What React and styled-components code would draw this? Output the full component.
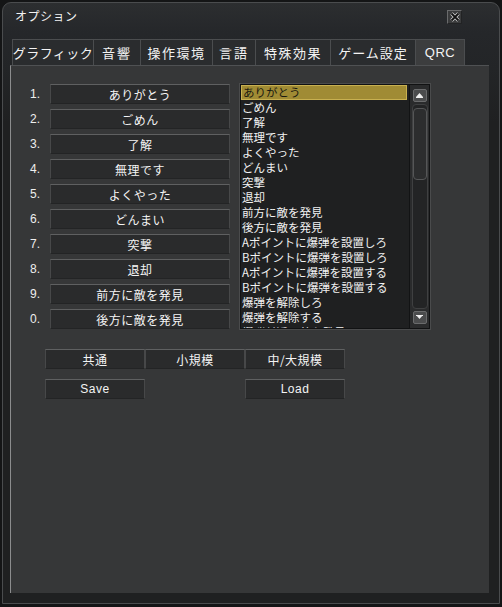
import React from 'react';
import styled, { createGlobalStyle } from 'styled-components';

const Global = createGlobalStyle`
  html, body { margin: 0; padding: 0; background: #121314; }
  body { font-family: "Noto Sans CJK JP", "Noto Sans", sans-serif; color: #f2f2f2; }
  #root { width: 502px; height: 607px; }
`;

const Window = styled.div`
  width: 502px;
  height: 607px;
  box-sizing: border-box;
  background: #141516;
  padding: 2px 2px 3px 2px;
  display: flex;
`;

const Frame = styled.div`
  flex: 1;
  display: flex;
  flex-direction: column;
  border: 1px solid #4a4c4e;
  border-radius: 9px 9px 0 0;
  background: linear-gradient(180deg, #2c2e30 0px, #25272a 30px, #232527 66px, #1f2021 120px);
  padding-bottom: 10px;
  min-height: 0;
`;

const TitleBar = styled.div`
  height: 25px;
  display: flex;
  align-items: center;
  justify-content: space-between;
  padding: 0 37px 0 12px;
  font-size: 12px;
  letter-spacing: 0.5px;
`;

const CloseBtn = styled.div`
  width: 15px;
  height: 14px;
  box-sizing: border-box;
  background: #3a3b3c;
  border: 1px solid #6a6b6c;
  border-right-color: #222324;
  border-bottom-color: #222324;
  display: flex;
  align-items: center;
  justify-content: center;
  margin-top: 3px;
`;

const TabRow = styled.div`
  display: flex;
  margin-top: 11px;
  padding-left: 9px;
  height: 26px;
`;

const Tab = styled.div`
  width: ${p => p.$w}px;
  height: 26px;
  box-sizing: border-box;
  border: 1px solid #4b4d4f;
  border-bottom: none;
  margin-right: -1px;
  background: ${p => (p.$active ? '#3c3d3e' : '#2a2c2e')};
  display: flex;
  align-items: center;
  justify-content: center;
  white-space: nowrap;
  font-size: 13px;
  letter-spacing: ${p => p.$ls}px;
  font-family: ${p => (p.$latin ? '"Liberation Sans", sans-serif' : '"Noto Sans CJK JP", sans-serif')};
  color: #f4f4f4;
`;

const Panel = styled.div`
  flex: 1;
  margin: 0 10px 0 7px;
  background: #363738;
  border-left: 1px solid #8c8d8e;
  border-top: 1px solid #4f5153;
  padding-top: 18px;
  display: flex;
  flex-direction: column;
`;

const Main = styled.div`
  display: flex;
  gap: 10px;
  align-items: flex-start;
`;

const SlotGrid = styled.div`
  display: grid;
  grid-template-columns: 29px 180px;
  grid-auto-rows: 20px;
  column-gap: 10px;
  row-gap: 5px;
`;

const Num = styled.div`
  text-align: right;
  font-family: "Liberation Sans", sans-serif;
  font-size: 12px;
  line-height: 20px;
  color: #eeeeee;
`;

const Btn = styled.div`
  width: ${p => (p.$w ? `${p.$w}px` : 'auto')};
  height: 20px;
  box-sizing: border-box;
  background: #2a2b2c;
  border: 1px solid #474849;
  border-top-color: #5f6061;
  border-bottom-color: #232425;
  display: flex;
  align-items: center;
  justify-content: center;
  font-size: 12px;
  letter-spacing: 0.5px;
  font-family: ${p => (p.$latin ? '"Liberation Sans", sans-serif' : '"Noto Sans CJK JP", sans-serif')};
  color: #f4f4f4;
`;

const ListBox = styled.div`
  width: 190px;
  height: 245px;
  box-sizing: border-box;
  border: 1px solid #111213;
  outline: 1px solid #4a4b4c;
  background: #1f2021;
  display: flex;
`;

const Items = styled.div`
  flex: 1;
  overflow: hidden;
`;

const Item = styled.div`
  height: 15px;
  font-size: 11.5px;
  padding-left: 1px;
  margin-right: 2px;
  white-space: nowrap;
  overflow: hidden;
  color: ${p => (p.$sel ? '#1a1a10' : '#f2f2f2')};
  background: ${p => (p.$sel ? '#a08b34' : 'transparent')};
  border: ${p => (p.$sel ? '1px solid #c8b050' : 'none')};
  box-sizing: border-box;
  line-height: ${p => (p.$sel ? '13px' : '15px')};
`;

const ScrollBar = styled.div`
  width: 20px;
  background: #2a2b2c;
  border-left: 1px solid #121314;
  display: flex;
  flex-direction: column;
  align-items: center;
  padding: 4px 0 4px;
  box-sizing: border-box;
  gap: 2px;
`;

const ArrowBtn = styled.div`
  width: 14px;
  height: 13px;
  box-sizing: border-box;
  border-radius: 2px;
  background: #4b4c4d;
  border: 1px solid #6a6b6c;
  display: flex;
  align-items: center;
  justify-content: center;
`;

const Track = styled.div`
  flex: 1;
  width: 16px;
  box-sizing: border-box;
  border: 1px solid #3f4041;
  border-radius: 4px;
  background: #232425;
  padding-top: 3px;
`;

const Thumb = styled.div`
  height: 72px;
  box-sizing: border-box;
  border: 1px solid #555657;
  border-radius: 4px;
  background: #2c2d2e;
`;

const Bottom = styled.div`
  padding-left: 34px;
  margin-top: 20px;
  display: flex;
  flex-direction: column;
  gap: 10px;
`;

const BtnRow = styled.div`
  display: flex;
  gap: ${p => p.$gap || 0}px;
`;

const slots = ['ありがとう', 'ごめん', '了解', '無理です', 'よくやった', 'どんまい', '突撃', '退却', '前方に敵を発見', '後方に敵を発見'];
const nums = ['1.', '2.', '3.', '4.', '5.', '6.', '7.', '8.', '9.', '0.'];
const list = [
  'ありがとう', 'ごめん', '了解', '無理です', 'よくやった', 'どんまい', '突撃', '退却',
  '前方に敵を発見', '後方に敵を発見', 'Aポイントに爆弾を設置しろ', 'Bポイントに爆弾を設置しろ',
  'Aポイントに爆弾を設置する', 'Bポイントに爆弾を設置する', '爆弾を解除しろ', '爆弾を解除する', '爆弾付近に敵を発見',
];
const tabs = [
  ['グラフィック', 82, 0.5], ['音響', 48, 2], ['操作環境', 73, 1.5], ['言語', 44, 2], ['特殊効果', 76, 1.5], ['ゲーム設定', 86, 1], ['QRC', 50, 0.5],
];

const Tri = ({ down }) => (
  <svg width="7" height="5" viewBox="0 0 7 5">
    <polygon points={down ? '0,0 7,0 3.5,4' : '3.5,0 7,4 0,4'} fill="#f0f0f0" />
    <rect x="0" y={down ? 0 : 4} width="7" height="1" fill="#f0f0f0" />
  </svg>
);

export default function App() {
  return (
    <>
      <Global />
      <Window>
        <Frame>
          <TitleBar>
            <span>オプション</span>
            <CloseBtn>
              <svg width="10" height="10" viewBox="0 0 10 10">
                <path d="M1.5 1.5 L8.5 8.5 M8.5 1.5 L1.5 8.5" stroke="#d0d0d0" strokeWidth="3.4" />
                <path d="M1.5 1.5 L8.5 8.5 M8.5 1.5 L1.5 8.5" stroke="#111" strokeWidth="1.8" />
              </svg>
            </CloseBtn>
          </TitleBar>
          <TabRow>
            {tabs.map(([t, w, ls]) => (
              <Tab key={t} $w={w} $ls={ls} $active={t === 'QRC'} $latin={t === 'QRC'}>{t}</Tab>
            ))}
          </TabRow>
          <Panel>
            <Main>
              <SlotGrid>
                {slots.map((s, i) => (
                  <React.Fragment key={i}>
                    <Num>{nums[i]}</Num>
                    <Btn>{s}</Btn>
                  </React.Fragment>
                ))}
              </SlotGrid>
              <ListBox>
                <Items>
                  {list.map((s, i) => (
                    <Item key={i} $sel={i === 0}>{s}</Item>
                  ))}
                </Items>
                <ScrollBar>
                  <ArrowBtn><Tri /></ArrowBtn>
                  <Track><Thumb /></Track>
                  <ArrowBtn><Tri down /></ArrowBtn>
                </ScrollBar>
              </ListBox>
            </Main>
            <Bottom>
              <BtnRow>
                <Btn $w={100}>共通</Btn>
                <Btn $w={100}>小規模</Btn>
                <Btn $w={100}>中/大規模</Btn>
              </BtnRow>
              <BtnRow $gap={100}>
                <Btn $w={100} $latin>Save</Btn>
                <Btn $w={100} $latin>Load</Btn>
              </BtnRow>
            </Bottom>
          </Panel>
        </Frame>
      </Window>
    </>
  );
}
